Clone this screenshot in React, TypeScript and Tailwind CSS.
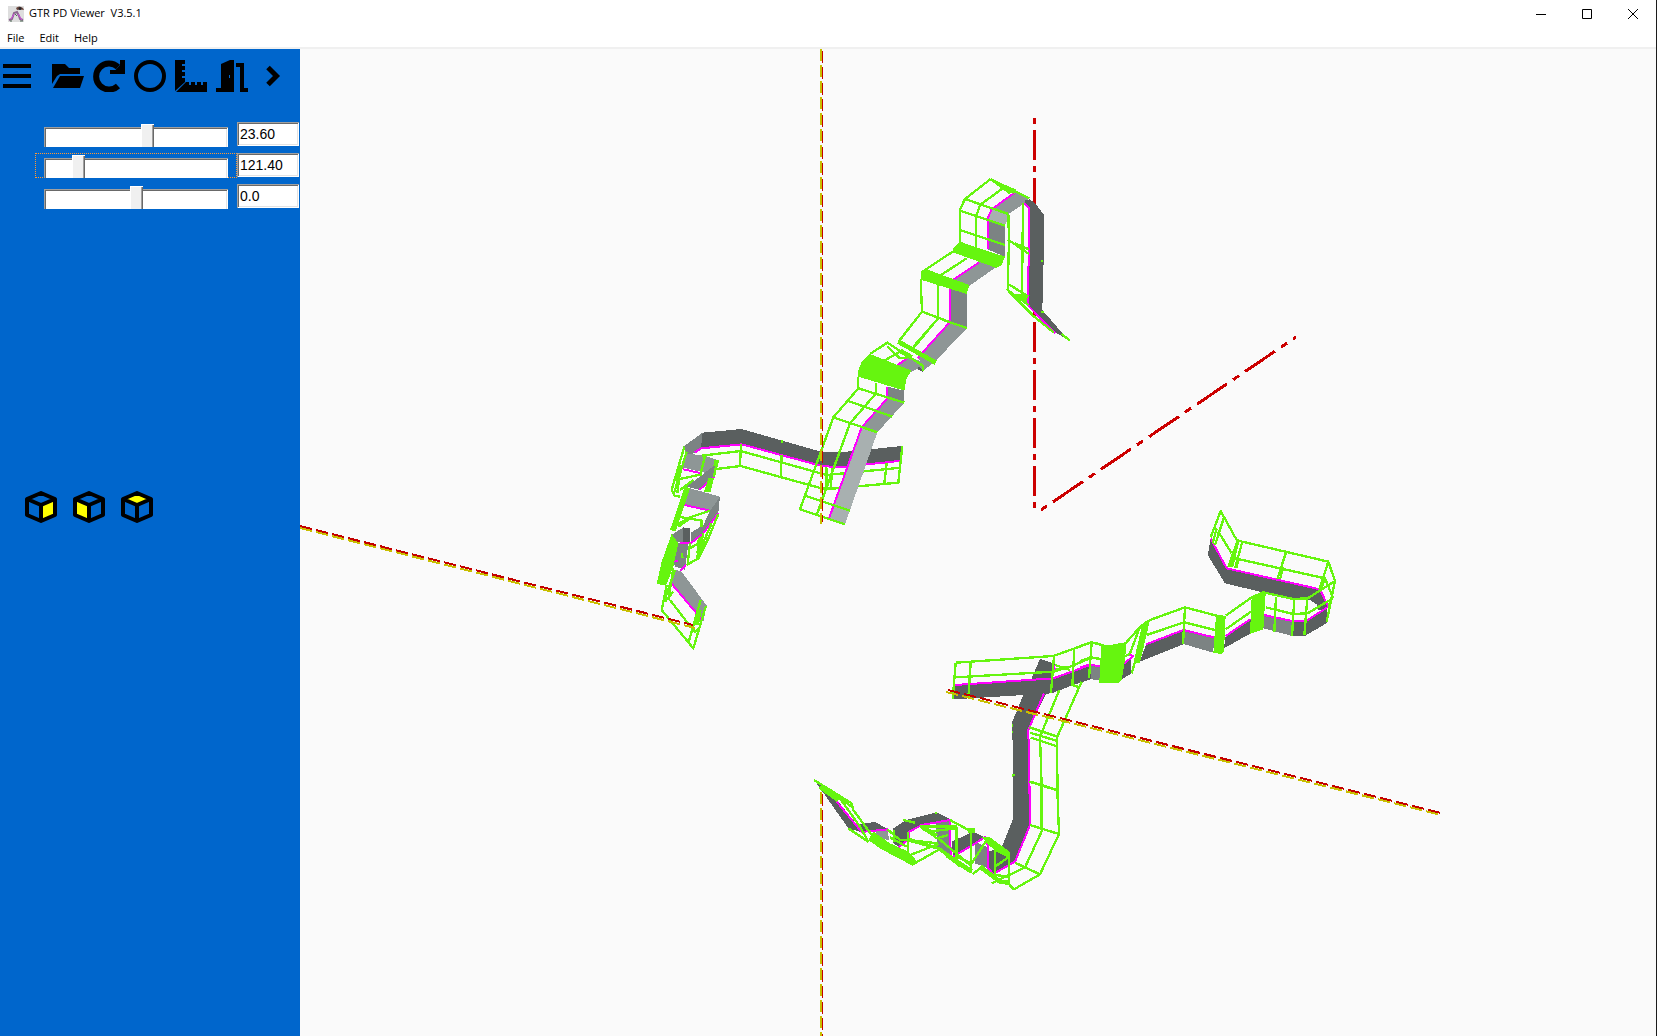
import React from "react";

const DARK = "#5a5f5f";
const SLATE = "#7c8383";
const MID = "#8e9696";
const PALE = "#a8b0b0";

type Face = [color: string, points: string];

type SectionProps = {
  x: number;
  y: number;
  faces: Face[];
  edges: string;
  rails: string;
  solids?: string[];
  heavy?: string;
};

/* One stretch of walkway, drawn at three units per scene pixel. */
function Section({ x, y, faces, edges, rails, solids = [], heavy }: SectionProps) {
  return (
    <g transform={`translate(${x} ${y}) scale(0.33333)`} strokeLinejoin="round">
      {faces.map(([color, points]) => (
        <polygon key={points} points={points} fill={color} />
      ))}
      <path d={edges} fill="none" stroke="#ff00ff" strokeWidth="6" />
      {solids.map((points) => (
        <polygon key={points} points={points} fill="#66f50f" />
      ))}
      <path d={rails} fill="none" stroke="#66f50f" strokeWidth="7" />
      {heavy && <path d={heavy} fill="none" stroke="#66f50f" strokeWidth="14" />}
    </g>
  );
}

function Scene() {
  return (
    <svg
      role="img"
      aria-label="3D model view"
      className="h-full w-full"
      viewBox="300 49 1356 987"
      preserveAspectRatio="xMinYMin slice"
      shapeRendering="crispEdges"
    >
      <g fill="none" stroke="#cc0000" strokeWidth="3">
        <path d="M1034.5 118V508" strokeDasharray="6 6 30 6" />
        <path d="M1041 510L1296 337" pathLength="255" strokeDasharray="6 6 30 6" />
      </g>

      <Section
        x={640}
        y={410}
        faces={[
          [DARK, "188,68 305,57 550,127 600,127 787,108 785,152 600,172 545,168 305,103 183,115"],
          [SLATE, "188,68 183,115 165,127 135,150 133,108"],
          [MID, "135,130 195,137 232,150 225,195 125,172"],
          [SLATE, "225,165 222,200 180,240 140,230"],
          [MID, "140,232 240,260 230,290 210,303 133,283"],
          [SLATE, "240,260 235,310 190,370 155,398 152,368 190,345 210,303"],
          [SLATE, "95,375 130,352 130,398 100,395"],
          [DARK, "130,352 150,355 150,400 130,398"],
          [SLATE, "108,398 145,402 135,480 105,470 100,450"],
          [MID, "105,478 125,485 200,587 190,635 92,518"],
        ]}
        edges="M183,115L305,103L545,168L600,172L785,152M183,115L165,127M130,178L185,190M133,285L210,302M235,310L190,370L155,398L120,398M178,240L222,200M92,518L185,628M100,452H115M120,482L138,465"
        solids={["135,228 150,235 107,364 90,360", "95,372 115,400 100,470 78,527 50,522 65,455", "205,205 222,205 212,245 192,245"]}
        rails="M185,137L302,123L560,195L783,173M230,177L302,168L555,238L775,218L787,108M303,103L300,168M427,90V98M425,135L422,200M740,160L733,220M562,175L558,238M577,175L572,235
          M133,110L95,240L105,258L120,260M140,125L102,250M122,165L112,250M105,210L185,193M120,240L160,210M232,150L222,200M195,138L182,190
          M110,345L150,322L210,302M115,320L185,332V350M115,350L150,325M235,312L205,385L175,445L140,465M215,340L180,420M180,380L172,445M150,400L143,460M150,415L200,385M190,370L172,445M125,430L128,445
          M80,525L65,600L160,715L198,587M100,475L85,570M105,480L75,565M90,570L140,635L165,665L175,655M182,570L145,700M100,545L75,575"
        heavy="M120,165L112,215M180,385L176,430M230,150L227,170M178,600L170,645"
      />

      <Section
        x={900}
        y={110}
        faces={[
          [MID, "345,245 388,270 325,312 275,298"],
          [PALE, "275,298 328,312 315,347 262,325"],
          [SLATE, "262,325 315,347 315,440 262,418"],
          [MID, "238,455 290,470 205,530 160,507"],
          [SLATE, "148,537 200,548 200,655 148,637"],
          [DARK, "372,272 390,268 410,285 432,315 432,410 427,600 505,690 462,665 385,585 387,295"],
        ]}
        edges="M275,298L345,247M275,298L263,325V418M238,457L160,509M150,537V637M372,280L388,295L387,400L383,585L465,670"
        solids={[
          "158,418 180,395 315,440 305,465 290,474 158,427",
          "62,485 80,478 208,525 200,552 62,509",
          "365,550 383,555 380,585 338,555",
        ]}
        rails="M272,207L195,267L180,298V400M272,207L388,265M272,207L330,250M308,235L240,285L228,320V415M195,267L325,312M180,302L315,347M180,360L315,405
          M158,425L65,487M200,445L120,497M62,507L66,605L200,655M114,525V625L40,715M66,605L0,690M325,312L327,390L323,540L400,618L462,668M369,280L366,555M323,388L387,432M345,400L387,418M327,523L385,560M323,540L385,585
          M424,453H430M424,606H432M485,672L510,692"
        heavy="M310,230L345,245"
      />

      <Section
        x={790}
        y={320}
        faces={[
          [MID, "478,8 530,25 435,125 400,152 385,110"],
          [SLATE, "480,8 488,-5 530,-5 530,22"],
          [MID, "323,135 355,112 400,125 400,150 385,145 365,155"],
          [DARK, "383,138 400,150 398,155 385,150"],
          [SLATE, "292,200 343,212 343,248 292,235"],
          [MID, "292,235 343,248 262,337 215,322"],
          [PALE, "212,322 262,337 165,613 115,597"],
        ]}
        edges="M478,8L382,115M352,115L320,137M292,200V235L215,322L117,595"
        solids={["205,150 215,125 240,102 365,152 350,175 343,212 205,170"]}
        rails="M205,170V205L343,248M258,190V220L180,310L80,585M205,205L130,292L30,568L165,613M175,243L307,290M130,292L262,337M45,527L180,572M240,102L292,68L400,138V152M375,2L325,65M440,0L370,80M283,122L335,92M292,80L330,115L352,112M460,0L530,24M100,505H145M108,440V510"
        heavy="M325,65L437,128M330,92L365,112"
      />

      <Section
        x={1080}
        y={500}
        faces={[
          [DARK, "0,503 30,495 28,537 0,548"],
          [SLATE, "30,495 62,503 60,542 28,537"],
          [DARK, "133,487 152,475 155,520 122,540"],
          [DARK, "198,433 310,390 310,433 180,485"],
          [SLATE, "310,390 402,412 400,458 310,432"],
          [DARK, "437,408 512,357 512,400 432,445"],
          [SLATE, "552,345 637,363 637,408 550,385"],
          [DARK, "637,363 680,362 742,320 742,368 675,408 637,408"],
          [DARK, "392,118 440,205 720,268 742,318 735,335 712,328 712,315 690,300 640,297 560,280 435,250 383,165"],
        ]}
        edges="M0,503L30,493L62,500M133,490L160,468L148,465M198,433L310,390L402,412M437,408L512,357M552,345L637,363L680,362L745,320L720,268L440,205L392,116"
        solids={[
          "65,432 85,436 140,426 135,480 125,540 115,548 58,548 60,500",
          "408,345 437,347 432,455 425,461 400,460",
          "515,290 550,275 557,282 550,388 510,402",
          "185,380 210,360 180,488 160,490",
          "470,118 478,125 460,200 442,200",
        ]}
        rails="M0,438L35,427L65,435M0,483L32,472L62,477M35,427L27,535M140,426L183,378L210,360L315,322L410,347M200,405L312,367L405,390M315,322L309,433M437,347L515,292L550,277L640,297L683,295L765,243L745,185L487,125L470,120L422,33L392,112
          M437,388L513,335M557,322L640,342L683,340L750,300M765,243L740,365M588,290L583,395M643,297L636,408M682,295L673,405M618,157L592,238M610,200L600,238M465,175L735,235L758,290L745,320M745,185L718,268M735,235L725,265M487,125L465,205M475,175L470,205M432,52L405,135M415,95L455,160M410,85L398,130M180,380L150,460M200,365L155,520M135,470L150,460"
      />

      <Section
        x={940}
        y={640}
        faces={[
          [DARK, "300,57 345,72 338,120 265,270 271,555 250,600 198,600 220,540 217,245 250,165 275,115"],
          [DARK, "42,135 340,118 452,75 452,118 400,135 335,160 42,178"],
        ]}
        edges="M45,135L340,115L450,75L480,78M312,160L265,270L271,555M342,75L345,90"
        rails="M48,68L340,48L455,7L480,12M48,112L340,95L390,80L455,53L480,57M47,68L38,178M92,68L85,175M342,48L333,158M403,28L397,135L418,142M455,7L447,115M345,75L390,90M345,90L380,80
          M268,262L352,290M270,278L352,303M272,293L352,319M352,319V290L425,125M352,317V400L355,450M300,290L358,150M300,290L305,440V570M272,425L352,450M215,257H220M215,276H220M217,407H225"
      />

      <Section
        x={800}
        y={760}
        faces={[
          [DARK, "50,70 80,85 115,125 190,218 145,205"],
          [DARK, "172,195 225,185 262,207 190,218"],
          [MID, "225,212 262,208 268,240 235,235"],
          [DARK, "280,205 318,180 410,157 450,177 365,195 328,215 328,235 300,262 280,250"],
          [SLATE, "408,190 450,182 452,285 412,265"],
          [DARK, "455,245 520,215 555,232 460,290"],
          [SLATE, "525,245 562,262 565,325 525,310"],
          [DARK, "565,275 605,262 640,175 640,0 688,0 690,195 645,305 580,342 565,330"],
        ]}
        edges="M110,125L185,216L262,208L265,215M295,262L328,235V215L365,195L450,180L452,285M460,290L555,232L565,262V325L580,342L645,305L690,195L687,0"
        solids={[
          "205,240 220,215 270,250 325,275 355,308 338,317 295,295 240,265",
          "325,232 420,262 515,330 475,320 415,270 325,245",
          "545,230 570,232 630,276 628,295 590,275 560,250",
        ]}
        rails="M42,60L155,130L160,150L215,225M60,80L120,115L180,200L205,245M80,85L155,140M145,205L205,245M262,208L300,240H325M282,210V245M325,215V290M325,240L415,250M335,315L415,270M375,200L410,235L445,225M360,200H470M380,215L470,205M450,180L515,215M470,200V305M513,215V340M518,342L550,318M585,260V345M628,280V375
          M585,320L628,290M585,345L628,350M628,375L642,388L720,343L777,222L772,90V0M688,65L775,92M690,195L777,222M723,0L727,210L675,322L575,370M645,308L720,343M310,180L345,188M318,290L415,252M408,155V162M638,45H645M270,232L320,260M415,235L510,315M470,290L515,310L560,240"
        heavy="M60,80L115,120M365,200L410,228M440,285L515,335M540,320L600,365L628,368M505,212H525"
      />

      <g fill="none">
        <g stroke="#c8be00" strokeWidth="2" strokeDasharray="12 4">
          <path d="M821 49V524M821 792V1036" />
          <path d="M300 528L695 628" pathLength="395" />
          <path d="M946 692L1441 815" pathLength="495" />
        </g>
        <g stroke="#c40000" strokeWidth="2" strokeDasharray="12 4">
          <path d="M822.5 51V522M822.5 794V1036" strokeWidth="1" />
          <path d="M300 526L693 625" pathLength="393" />
          <path d="M948 690L1441 813" pathLength="493" />
        </g>
      </g>
    </svg>
  );
}

const iconButton = "block size-8 shrink-0 text-black";

function Glyph({ children }: { children: React.ReactNode }) {
  return (
    <svg viewBox="0 0 32 32" className="size-8" fill="currentColor" aria-hidden="true">
      {children}
    </svg>
  );
}

const tools: { label: string; glyph: React.ReactNode }[] = [
  {
    label: "Open",
    glyph: (
      <>
        <path d="M0 4h13l4 4h11v6H8l-3 2-5 8z" />
        <path d="M8 16h24l-4 12H1z" />
      </>
    ),
  },
  {
    label: "Reload",
    glyph: (
      <>
        <path d="M25 26A13 13 0 1 1 25 7" fill="none" stroke="currentColor" strokeWidth="6" />
        <path d="M32 0v14H17V10h5.500L27 5V0z" />
      </>
    ),
  },
  { label: "Circle", glyph: <circle cx="16" cy="16" r="14" fill="none" stroke="currentColor" strokeWidth="4" /> },
  {
    label: "Measure",
    glyph: (
      <>
        <path d="M0 0h10v4H7v2h3v4H7v2h3v4H7v2h3v4L0 31z" />
        <path d="M1 32l10-10h3v3h2v-3h4v3h2v-3h4v3h2v-3h4v10z" />
      </>
    ),
  },
  {
    label: "Exit",
    glyph: (
      <>
        <path d="M0 28h5V4l9-4h4v32H0z" />
        <path d="M20 3h8v25h4v4h-8V7h-4z" />
        <path d="M13 15h1v3h-1z" fill="#0066cc" />
      </>
    ),
  },
  {
    label: "More",
    glyph: <path d="M11 7.500L19.500 16L11 24.500" fill="none" stroke="currentColor" strokeWidth="5" />,
  },
];

const rotations = [
  { label: "X rotation", angle: 23.6, text: "23.60", focused: false },
  { label: "Y rotation", angle: -121.4, text: "121.40", focused: true },
  { label: "Z rotation", angle: 0, text: "0.0", focused: false },
];

const cubes = [
  { label: "Right view", face: "16,14 30,8 30,24 16,30" },
  { label: "Front view", face: "2,8 16,14 16,30 2,24" },
  { label: "Top view", face: "16,2 30,8 16,14 2,8" },
];

const slider =
  "block h-[24px] w-[184px] appearance-none bg-transparent outline-none [&::-webkit-slider-runnable-track]:mt-[4px] [&::-webkit-slider-runnable-track]:h-[20px] [&::-webkit-slider-runnable-track]:bg-white [&::-webkit-slider-runnable-track]:shadow-[inset_1px_1px_#a0a0a0,inset_-1px_0_#ffffff,inset_2px_2px_#696969,inset_-2px_0_#e3e3e3] [&::-webkit-slider-thumb]:mt-[-3px] [&::-webkit-slider-thumb]:h-[23px] [&::-webkit-slider-thumb]:w-[13px] [&::-webkit-slider-thumb]:appearance-none [&::-webkit-slider-thumb]:bg-[#f0f0f0] [&::-webkit-slider-thumb]:shadow-[inset_1px_1px_#ffffff,inset_-1px_0_#696969,inset_-2px_0_#a0a0a0]";

export default function App() {
  return (
    <div className="flex h-screen flex-col border-r border-[#1c1c1c] bg-white font-['Open_Sans','Noto_Sans',sans-serif] text-[11px] text-black">
      <header className="flex h-[27px] shrink-0 items-center pl-2">
        <svg viewBox="0 0 16 16" className="size-4" aria-hidden="true">
          <path d="M0 0h16v16H0z" fill="#dedede" />
          <path d="M8 2q3-3 7 0l1 2q-4-1-7 0z" fill="#6f4b42" />
          <circle cx="12" cy="2.500" r="1.500" fill="#26272b" />
          <path d="M1 14l3-1 2-6 3-1 2 4 1 3 3 1" fill="none" stroke="#8d6791" strokeWidth="2" />
          <path d="M3 13l3-5M10 8l4 6" stroke="#d04be0" strokeWidth="1" />
          <path d="M2 15h2M7 8l2 2M12 15h3" stroke="#4d6b55" />
        </svg>
        <h1 className="ml-[5px] whitespace-pre">GTR PD Viewer  V3.5.1</h1>
        <div className="ml-auto flex">
          {[
            ["Minimize", "M0 5.500H10"],
            ["Maximize", "M.5.500H9.500V9.500H.5z"],
            ["Close", "M0 0L10 10M10 0L0 10"],
          ].map(([label, d]) => (
            <button key={label} aria-label={label} className="flex h-[26px] w-[46px] items-center justify-center">
              <svg viewBox="0 0 10 10" className="size-[10px] overflow-visible" fill="none" stroke="black">
                <path d={d} />
              </svg>
            </button>
          ))}
        </div>
      </header>

      <nav className="flex h-[22px] shrink-0 gap-[15px] border-b-2 border-[#f0f0f0] pl-[7px] pt-[3px]">
        <button>File</button>
        <button>Edit</button>
        <button>Help</button>
      </nav>

      <main className="flex min-h-0 flex-1">
        <aside className="w-[300px] shrink-0 bg-[#0066cc] pt-[11px]">
          <div className="flex gap-[9px] pl-[1px]">
            <button aria-label="Menu" className={`${iconButton} mr-[10px]`}>
              <Glyph>
                <path d="M2 4h28v4H2zM2 14h28v4H2zM2 24h28v4H2z" />
              </Glyph>
            </button>
            {tools.map((tool) => (
              <button key={tool.label} aria-label={tool.label} className={iconButton}>
                <Glyph>{tool.glyph}</Glyph>
              </button>
            ))}
          </div>

          <div className="mt-[30px] flex flex-col gap-[6px] pl-[35px]">
            {rotations.map((r) => (
              <div key={r.label} className="flex h-[25px]">
                <div
                  className={
                    r.focused
                      ? "w-[202px] border border-dotted border-[#ff9933] pl-[8px]"
                      : "w-[202px] border border-transparent pl-[8px]"
                  }
                >
                  <input
                    type="range"
                    aria-label={r.label}
                    min={-180}
                    max={180}
                    step={0.1}
                    defaultValue={r.angle}
                    className={slider}
                  />
                </div>
                <input
                  type="text"
                  aria-label={`${r.label} value`}
                  defaultValue={r.text}
                  className="h-[24px] w-[62px] bg-white pb-px pl-[3px] font-['Liberation_Sans',sans-serif] text-[14px] shadow-[inset_1px_1px_#a0a0a0,inset_-1px_-1px_#ffffff,inset_2px_2px_#696969,inset_-2px_-2px_#e3e3e3] outline-none"
                />
              </div>
            ))}
          </div>

          <div className="mt-[282px] flex gap-4 pl-[25px]">
            {cubes.map((cube) => (
              <button key={cube.label} aria-label={cube.label} className={iconButton}>
                <svg viewBox="0 0 32 32" className="size-8" aria-hidden="true">
                  <polygon points={cube.face} fill="#ffff00" />
                  <path
                    d="M16 2L30 8V24L16 30L2 24V8ZM2 8L16 14L30 8M16 14V30"
                    fill="none"
                    stroke="black"
                    strokeWidth="4"
                    strokeLinejoin="round"
                  />
                </svg>
              </button>
            ))}
          </div>
        </aside>
        <section className="min-w-0 flex-1 bg-[#fafafa]">
          <Scene />
        </section>
      </main>
    </div>
  );
}
